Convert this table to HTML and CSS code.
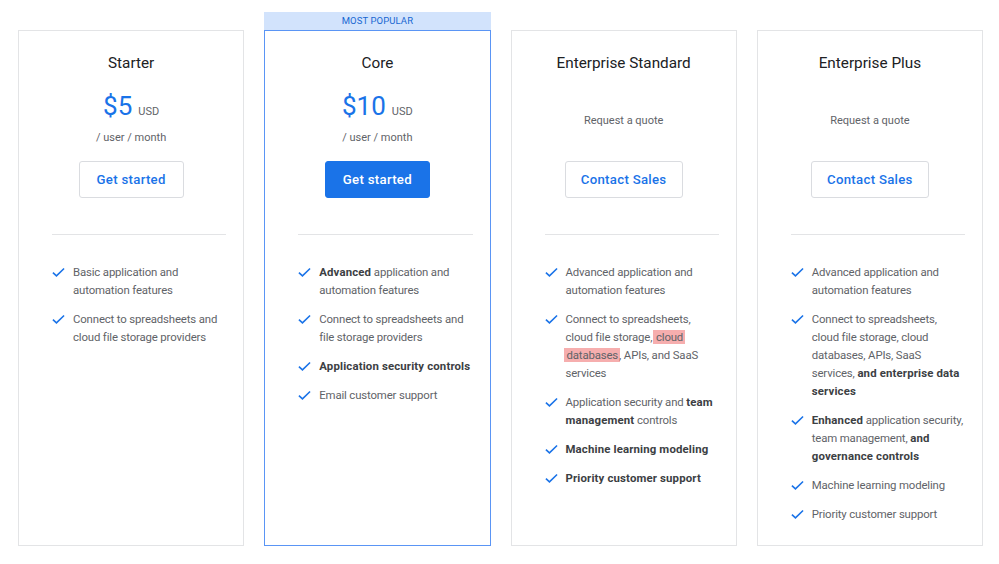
FILE: index.html
```html
<!DOCTYPE html>
<html>
<head>
<meta charset="utf-8">
<link rel="stylesheet" href="styles.css">
</head>
<body>
<div class="plans">
  <div class="col">
    <div class="badge badge-empty"></div>
    <div class="card">
      <div class="head">
        <h2 class="title">Starter</h2>
        <div class="price"><span class="amount">$5</span><span class="cur">USD</span></div>
        <div class="per">/ user / month</div>
        <a class="btn">Get started</a>
      </div>
      <ul class="features">
        <li><svg class="check" viewBox="0 0 14 11"><path d="M1 5.6 L4.8 9.2 L13 1.2"/></svg><span>Basic application and automation features</span></li>
        <li><svg class="check" viewBox="0 0 14 11"><path d="M1 5.6 L4.8 9.2 L13 1.2"/></svg><span>Connect to spreadsheets and cloud file storage providers</span></li>
      </ul>
    </div>
  </div>
  <div class="col">
    <div class="badge">MOST POPULAR</div>
    <div class="card card-popular">
      <div class="head">
        <h2 class="title">Core</h2>
        <div class="price"><span class="amount">$10</span><span class="cur">USD</span></div>
        <div class="per">/ user / month</div>
        <a class="btn btn-primary">Get started</a>
      </div>
      <ul class="features">
        <li><svg class="check" viewBox="0 0 14 11"><path d="M1 5.6 L4.8 9.2 L13 1.2"/></svg><span><b>Advanced</b> application and automation features</span></li>
        <li><svg class="check" viewBox="0 0 14 11"><path d="M1 5.6 L4.8 9.2 L13 1.2"/></svg><span>Connect to spreadsheets and file storage providers</span></li>
        <li><svg class="check" viewBox="0 0 14 11"><path d="M1 5.6 L4.8 9.2 L13 1.2"/></svg><span><b>Application security controls</b></span></li>
        <li><svg class="check" viewBox="0 0 14 11"><path d="M1 5.6 L4.8 9.2 L13 1.2"/></svg><span>Email customer support</span></li>
      </ul>
    </div>
  </div>
  <div class="col">
    <div class="badge badge-empty"></div>
    <div class="card">
      <div class="head">
        <h2 class="title">Enterprise Standard</h2>
        <div class="quote">Request a quote</div>
        <a class="btn btn-wide">Contact Sales</a>
      </div>
      <ul class="features">
        <li><svg class="check" viewBox="0 0 14 11"><path d="M1 5.6 L4.8 9.2 L13 1.2"/></svg><span>Advanced application and automation features</span></li>
        <li><svg class="check" viewBox="0 0 14 11"><path d="M1 5.6 L4.8 9.2 L13 1.2"/></svg><span>Connect to spreadsheets, cloud file storage, <mark>cloud databases</mark>, APIs, and SaaS services</span></li>
        <li><svg class="check" viewBox="0 0 14 11"><path d="M1 5.6 L4.8 9.2 L13 1.2"/></svg><span>Application security and <b>team management</b> controls</span></li>
        <li><svg class="check" viewBox="0 0 14 11"><path d="M1 5.6 L4.8 9.2 L13 1.2"/></svg><span><b>Machine learning modeling</b></span></li>
        <li><svg class="check" viewBox="0 0 14 11"><path d="M1 5.6 L4.8 9.2 L13 1.2"/></svg><span><b>Priority customer support</b></span></li>
      </ul>
    </div>
  </div>
  <div class="col">
    <div class="badge badge-empty"></div>
    <div class="card">
      <div class="head">
        <h2 class="title">Enterprise Plus</h2>
        <div class="quote">Request a quote</div>
        <a class="btn btn-wide">Contact Sales</a>
      </div>
      <ul class="features">
        <li><svg class="check" viewBox="0 0 14 11"><path d="M1 5.6 L4.8 9.2 L13 1.2"/></svg><span>Advanced application and automation features</span></li>
        <li><svg class="check" viewBox="0 0 14 11"><path d="M1 5.6 L4.8 9.2 L13 1.2"/></svg><span>Connect to spreadsheets, cloud file storage, cloud databases, APIs, SaaS services, <b>and enterprise data services</b></span></li>
        <li><svg class="check" viewBox="0 0 14 11"><path d="M1 5.6 L4.8 9.2 L13 1.2"/></svg><span><b>Enhanced</b> application security, team management, <b>and governance controls</b></span></li>
        <li><svg class="check" viewBox="0 0 14 11"><path d="M1 5.6 L4.8 9.2 L13 1.2"/></svg><span>Machine learning modeling</span></li>
        <li><svg class="check" viewBox="0 0 14 11"><path d="M1 5.6 L4.8 9.2 L13 1.2"/></svg><span>Priority customer support</span></li>
      </ul>
    </div>
  </div>
</div>
</body>
</html>
```

FILE: styles.css
```css
* { box-sizing: border-box; }
html, body { margin: 0; padding: 0; background: #fff; }
body {
  font-family: Roboto, "Liberation Sans", sans-serif;
  color: #5f6368;
  width: 999px;
  height: 564px;
  overflow: hidden;
}
.plans {
  display: flex;
  gap: 20px;
  padding: 12px 16px 0 18px;
}
.col {
  flex: 1 1 0;
  display: flex;
  flex-direction: column;
  min-width: 0;
}
.badge {
  height: 18px;
  background: #d2e3fc;
  color: #1967d2;
  font-size: 9.5px;
  line-height: 18px;
  text-align: center;
  letter-spacing: 0.1px;
}
.badge-empty { background: transparent; }
.card {
  height: 516px;
  border: 1px solid #e3e4e6;
}
.card-popular { border-color: #5a95f5; }
.head {
  height: 203px;
  display: flex;
  flex-direction: column;
  align-items: center;
  padding-top: 20px;
}
.title {
  margin: 0;
  font-size: 15.3px;
  font-weight: 400;
  line-height: 24px;
  color: #202124;
}
.price {
  margin-top: 13px;
  height: 36px;
  display: flex;
  align-items: baseline;
}
.amount {
  font-size: 26px;
  line-height: 36px;
  color: #1a73e8;
}
.cur {
  font-size: 11px;
  margin-left: 6px;
  color: #5f6368;
}
.per {
  margin-top: 5px;
  font-size: 11px;
  line-height: 18px;
}
.quote {
  margin-top: 37px;
  margin-bottom: 17px;
  font-size: 11px;
  line-height: 18px;
}
.btn {
  margin-top: 14px;
  width: 105px;
  height: 37px;
  border: 1px solid #dadce0;
  border-radius: 3px;
  color: #1a73e8;
  font-size: 13.2px;
  font-weight: 500;
  letter-spacing: 0.3px;
  display: flex;
  align-items: center;
  justify-content: center;
}
.btn-wide { width: 118px; }
.btn-primary {
  background: #1a73e8;
  border-color: #1a73e8;
  color: #fff;
}
.features {
  list-style: none;
  margin: 0 17px 0 33px;
  padding: 28px 0 0 0;
  border-top: 1px solid #e3e4e6;
  font-size: 11.4px;
  letter-spacing: -0.15px;
  line-height: 18px;
}
.features li {
  display: flex;
  margin-bottom: 11px;
}
.check {
  flex: none;
  width: 13px;
  height: 11px;
  margin: 4px 8px 0 0;
  fill: none;
  stroke: #1a73e8;
  stroke-width: 1.7;
}
.features b { font-weight: 700; color: #3c4043; letter-spacing: 0.15px; }
mark {
  background: #f6aeae;
  color: inherit;
  padding: 0 2px 0 3px;
  margin-left: -2px;
  margin-right: -1px;
  -webkit-box-decoration-break: clone;
  box-decoration-break: clone;
}
```
